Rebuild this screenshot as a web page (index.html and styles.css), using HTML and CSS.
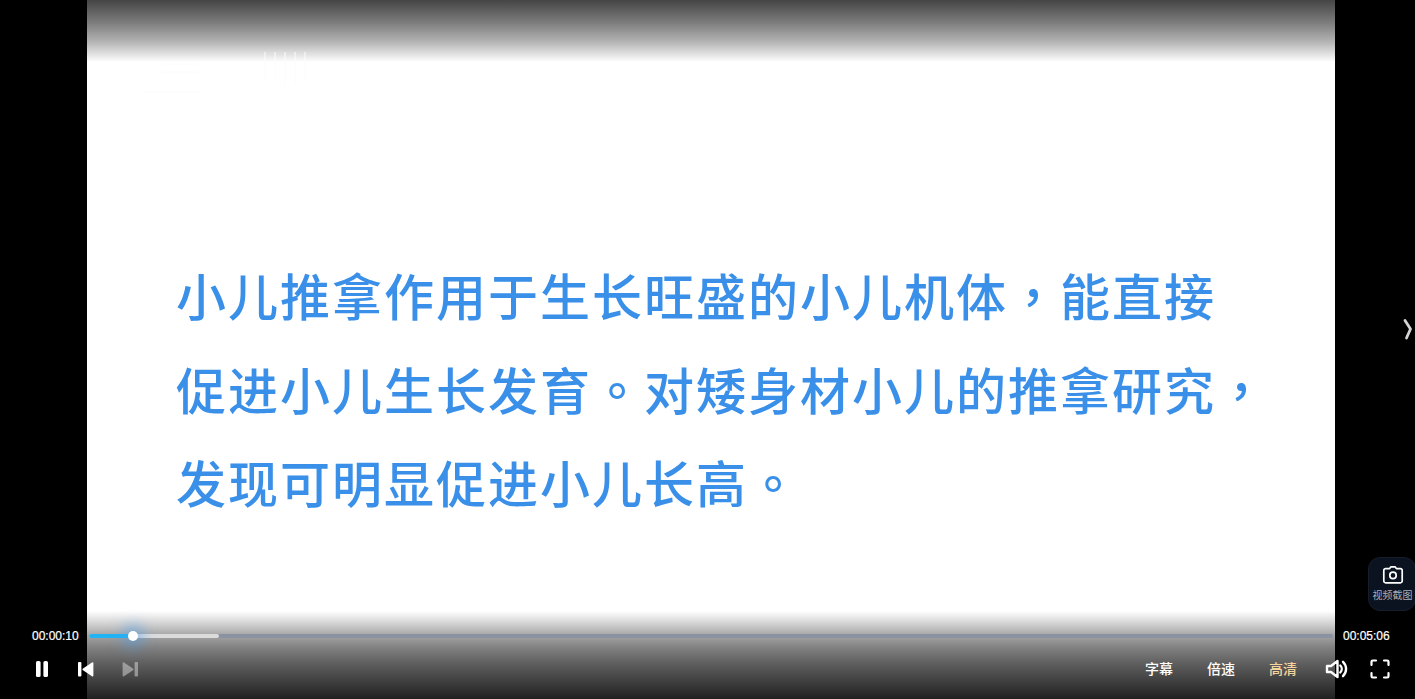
FILE: index.html
```html
<!DOCTYPE html>
<html lang="zh-CN">
<head>
<meta charset="utf-8">
<title>视频播放</title>
<link rel="stylesheet" href="styles.css">
</head>
<body>
<main class="player">
  <section class="video">
    <div class="shade-top"></div>
    <svg class="watermark" viewBox="0 0 170 50" width="170" height="50" aria-hidden="true">
      <path d="M6 46H60M24 18H58M20 26H60M126 6V36M136 6V38M146 6V40M156 6V38M166 6V34" fill="none" stroke="#fcfcfc" stroke-width="1"/>
    </svg>
    <div class="slide">
      <p class="line">小儿推拿作用于生长旺盛的小儿机体<span class="punct" lang="zh-Hant">，</span>能直接</p>
      <p class="line">促进小儿生长发育<span class="punct" lang="zh-Hant">。</span>对矮身材小儿的推拿研究<span class="punct" lang="zh-Hant">，</span></p>
      <p class="line">发现可明显促进小儿长高<span class="punct" lang="zh-Hant">。</span></p>
    </div>
    <div class="shade-bottom"></div>
  </section>

  <button class="next-lesson" aria-label="下一个">
    <svg viewBox="0 0 10 22" width="10" height="22"><path d="M2 2.5L7.5 11L3.5 20" fill="none" stroke="#d4d4d4" stroke-width="2.8" stroke-linecap="round" stroke-linejoin="round"/></svg>
  </button>

  <button class="snapshot">
    <svg viewBox="0 0 22 20" width="22" height="20"><path d="M7.6 3.6L9 1.8H13L14.4 3.6H18.4A1.8 1.8 0 0 1 20.2 5.4V16A1.8 1.8 0 0 1 18.4 17.8H3.6A1.8 1.8 0 0 1 1.8 16V5.4A1.8 1.8 0 0 1 3.6 3.6Z" fill="none" stroke="#fff" stroke-width="1.7" stroke-linejoin="round"/><circle cx="11" cy="10.4" r="3.2" fill="none" stroke="#fff" stroke-width="1.7"/></svg>
    <span>视频截图</span>
  </button>

  <div class="controls">
    <div class="progress-row">
      <span class="time time-start">00:00:10</span>
      <div class="track">
        <div class="buffered"></div>
        <div class="played"></div>
        <div class="thumb"></div>
      </div>
      <span class="time time-end">00:05:06</span>
    </div>
    <div class="button-row">
      <div class="group-left">
        <svg class="icon" viewBox="0 0 24 24" width="24" height="24"><rect x="6" y="4" width="4.6" height="16" rx="1.6" fill="#fff"/><rect x="13.4" y="4" width="4.6" height="16" rx="1.6" fill="#fff"/></svg>
        <svg class="icon" viewBox="0 0 24 24" width="24" height="24"><rect x="4" y="5" width="3.4" height="14.5" rx="1" fill="#fff"/><path d="M19.4 6V18.5C19.4 19.3 18.7 19.6 18 19.2L9 13.3C8.3 12.8 8.3 11.9 9 11.4L18 5.4C18.7 5 19.4 5.3 19.4 6Z" fill="#fff"/></svg>
        <svg class="icon dim" viewBox="0 0 24 24" width="24" height="24"><rect x="16.6" y="5" width="3.4" height="14.5" rx="1" fill="#fff"/><path d="M4.6 6V18.5C4.6 19.3 5.3 19.6 6 19.2L15 13.3C15.7 12.8 15.7 11.9 15 11.4L6 5.4C5.3 5 4.6 5.3 4.6 6Z" fill="#fff"/></svg>
      </div>
      <div class="group-right">
        <span class="option">字幕</span>
        <span class="option">倍速</span>
        <span class="option active">高清</span>
        <svg class="icon volume" viewBox="0 0 24 24" width="24" height="24"><path d="M2 9H6L12.5 4V20L6 15H2Z" fill="none" stroke="#fff" stroke-width="2.4" stroke-linejoin="round"/><path d="M15.3 8.5A5 5 0 0 1 15.3 15.5" fill="none" stroke="#fff" stroke-width="2.4" stroke-linecap="round"/><path d="M18 4.8A10 10 0 0 1 18 19.2" fill="none" stroke="#fff" stroke-width="2.4" stroke-linecap="round"/></svg>
        <svg class="icon fullscreen" viewBox="0 0 24 24" width="24" height="24"><path d="M8 3.5H4.8A1.3 1.3 0 0 0 3.5 4.8V8M16 3.5H19.2A1.3 1.3 0 0 1 20.5 4.8V8M20.5 16V19.2A1.3 1.3 0 0 1 19.2 20.5H16M8 20.5H4.8A1.3 1.3 0 0 1 3.5 19.2V16" fill="none" stroke="#fff" stroke-width="2.2" stroke-linecap="round"/></svg>
      </div>
    </div>
  </div>
</main>
</body>
</html>
```
FILE: styles.css
```css
* { box-sizing: border-box; }
html, body { margin: 0; height: 100%; background: #000; overflow: hidden; }
body { font-family: "Liberation Sans", "Noto Sans CJK SC", sans-serif; }

.player {
  position: relative;
  width: 1415px;
  height: 699px;
  display: flex;
  padding-left: 87px;
  background: #000;
}

.video {
  position: relative;
  width: 1248px;
  height: 699px;
  background: #fff;
  overflow: hidden;
}

.shade-top {
  position: absolute;
  inset: 0 0 auto 0;
  height: 62px;
  background: linear-gradient(#454545 0%, #7a7a7a 35%, #b5b5b5 68%, #ececec 92%, #fff 100%);
}

.shade-bottom {
  position: absolute;
  inset: auto 0 0 0;
  height: 88px;
  background: linear-gradient(#fff 0%, #d0d0d0 15%, #a4a4a4 28%, #808080 42%, #5e5e5e 60%, #3f3f3f 80%, #202020 100%);
}

.watermark { position: absolute; left: 52px; top: 46px; }

.slide {
  padding: 248px 0 0 89px;
  font-family: "Noto Sans CJK SC", sans-serif;
  font-size: 50px;
  letter-spacing: 2px;
  font-weight: 500;
  color: #3a90e8;
  filter: blur(0.5px);
}

.line {
  margin: 0;
  height: 93.5px;
  line-height: 93.5px;
  white-space: nowrap;
}

.punct { font-family: "Noto Sans CJK TC", sans-serif; }

button {
  border: 0;
  padding: 0;
  background: none;
  color: inherit;
  font: inherit;
}

.next-lesson {
  position: absolute;
  right: 2px;
  top: 318px;
  display: flex;
}

.snapshot {
  position: absolute;
  right: -1px;
  top: 557px;
  width: 48px;
  height: 54px;
  display: flex;
  flex-direction: column;
  align-items: center;
  gap: 4px;
  padding: 7px 0 0 1px;
  border-radius: 12px;
  background: #0b1320;
  border: 1px solid #161e2c;
  color: #a9b0bd;
  font-family: "Noto Sans CJK SC", sans-serif;
  font-size: 10px;
  line-height: 12px;
  white-space: nowrap;
}

.controls {
  position: absolute;
  left: 0;
  right: 0;
  bottom: 0;
  height: 75px;
  color: #fff;
}

.progress-row {
  display: flex;
  align-items: center;
  height: 24px;
  padding-left: 32px;
}

.time {
  font-size: 12px;
  line-height: 24px;
  -webkit-text-stroke: 0.2px #fff;
  width: 47px;
  white-space: nowrap;
}

.track {
  position: relative;
  width: 1244px;
  height: 4px;
  margin: 0 10px;
  border-radius: 2px;
  background: #8b93a3;
}

.buffered {
  position: absolute;
  inset: 0 auto 0 0;
  width: 130px;
  border-radius: 2px;
  background: #dcdcdc;
}

.played {
  position: absolute;
  inset: 0 auto 0 0;
  width: 44px;
  border-radius: 2px;
  background: #20b4f4;
}

.thumb {
  position: absolute;
  left: 39px;
  top: -3px;
  width: 10px;
  height: 10px;
  border-radius: 50%;
  background: #fff;
  box-shadow: 0 0 14px 6px rgba(70, 160, 245, 0.5);
}

.button-row {
  display: flex;
  justify-content: space-between;
  align-items: center;
  height: 42px;
  padding: 0 23px 0 30px;
}

.group-left { display: flex; align-items: center; gap: 20px; }

.group-right { display: flex; align-items: center; }

.option {
  width: 62px;
  padding-bottom: 2px;
  text-align: center;
  font-family: "Noto Sans CJK SC", sans-serif;
  font-size: 14px;
  font-weight: 500;
  line-height: 20px;
}

.option.active { color: #f6d29c; }

.icon { display: block; flex: none; }
.icon.dim { opacity: 0.4; }
.icon.volume { margin-left: 11px; }
.icon.fullscreen { margin-left: 19px; }
```
